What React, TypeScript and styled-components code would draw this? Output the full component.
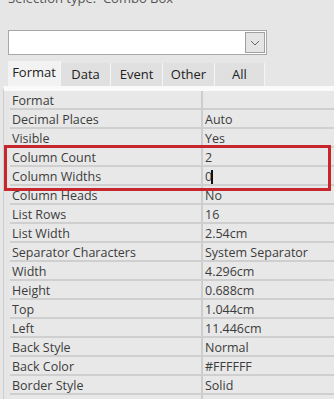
import styled, { createGlobalStyle } from "styled-components";

const Global = createGlobalStyle`
  html, body {
    margin: 0;
    padding: 0;
    background: #e6e6e6;
    overflow: hidden;
  }
  body {
    font-family: "Open Sans", "Noto Sans", sans-serif;
  }
`;

const Sheet = styled.div`
  width: 334px;
  height: 399px;
  overflow: hidden;
  background: #e6e6e6;
`;

const Title = styled.div`
  margin-top: -11px;
  padding-left: 8px;
  height: 41px;
  font-size: 13px;
  color: #555;
  line-height: 18px;
  white-space: nowrap;
`;

const Combo = styled.div`
  margin-left: 8px;
  width: 259px;
  height: 25px;
  box-sizing: border-box;
  background: #fff;
  border: 1px solid #a8a8a8;
  display: flex;
  justify-content: flex-end;
  align-items: stretch;
  padding: 1px;
`;

const DropButton = styled.div`
  width: 20px;
  box-sizing: border-box;
  border: 1px solid #a0a0a0;
  background: #e4e4e4;
  display: flex;
  align-items: center;
  justify-content: center;
`;

const Tabs = styled.div`
  margin-top: 6px;
  margin-left: 8px;
  display: flex;
  align-items: flex-end;
  height: 25px;
`;

const Tab = styled.div<{ $active?: boolean; $w: number }>`
  width: ${(p) => p.$w}px;
  height: ${(p) => (p.$active ? 25 : 23)}px;
  box-sizing: border-box;
  background: ${(p) => (p.$active ? "#f2f2f2" : "#e0e0e0")};
  border-right: 1px solid #f4f4f4;
  font-size: 13px;
  color: #222;
  display: flex;
  align-items: center;
  justify-content: center;
  padding-bottom: ${(p) => (p.$active ? 4 : 2)}px;
`;

const Panel = styled.div`
  position: relative;
  margin-left: 3px;
  border-left: 1px solid #cdcdcd;
  border-top: 5px solid #fafafa;
  padding-left: 6px;
`;

const Row = styled.div`
  display: grid;
  grid-template-columns: 191px 1fr;
  height: 19px;
  box-sizing: border-box;
  border-bottom: 2px solid #cfcfcf;
  background: #e8e8e8;
`;

const Cell = styled.div<{ $value?: boolean }>`
  font-size: 12.5px;
  line-height: 14px;
  height: 17px;
  box-sizing: border-box;
  color: #3c3c3c;
  padding-left: 2px;
  padding-top: 3px;
  white-space: nowrap;
  border-left: ${(p) => (p.$value ? "2px solid #cdcdcd" : "none")};
  display: flex;
  align-items: flex-start;
`;

const Caret = styled.span`
  display: inline-block;
  width: 2px;
  height: 14px;
  margin-left: -1px;
  background: #111;
`;

const Highlight = styled.div`
  position: absolute;
  left: 0px;
  top: 54px;
  width: 327px;
  height: 46px;
  box-sizing: border-box;
  border: 3px solid #c8262d;
  pointer-events: none;
`;

const rows: [string, string][] = [
  ["Format", ""],
  ["Decimal Places", "Auto"],
  ["Visible", "Yes"],
  ["Column Count", "2"],
  ["Column Widths", "0"],
  ["Column Heads", "No"],
  ["List Rows", "16"],
  ["List Width", "2.54cm"],
  ["Separator Characters", "System Separator"],
  ["Width", "4.296cm"],
  ["Height", "0.688cm"],
  ["Top", "1.044cm"],
  ["Left", "11.446cm"],
  ["Back Style", "Normal"],
  ["Back Color", "#FFFFFF"],
  ["Border Style", "Solid"],
  ["", ""],
];

const tabs: [string, number][] = [
  ["Format", 53],
  ["Data", 50],
  ["Event", 52],
  ["Other", 52],
  ["All", 50],
];

export default function App() {
  return (
    <Sheet>
      <Global />
      <Title>Selection type:&nbsp; Combo Box</Title>
      <Combo>
        <DropButton>
          <svg width="10" height="6" viewBox="0 0 10 6">
            <path d="M1 1 L5 5 L9 1" fill="none" stroke="#666" strokeWidth="1" />
          </svg>
        </DropButton>
      </Combo>
      <Tabs>
        {tabs.map(([t, w], i) => (
          <Tab key={t} $w={w} $active={i === 0}>
            {t}
          </Tab>
        ))}
      </Tabs>
      <Panel>
        {rows.map(([k, v], i) => (
          <Row key={i}>
            <Cell>{k}</Cell>
            <Cell $value>
              {v}
              {k === "Column Widths" && <Caret />}
            </Cell>
          </Row>
        ))}
        <Highlight />
      </Panel>
    </Sheet>
  );
}
